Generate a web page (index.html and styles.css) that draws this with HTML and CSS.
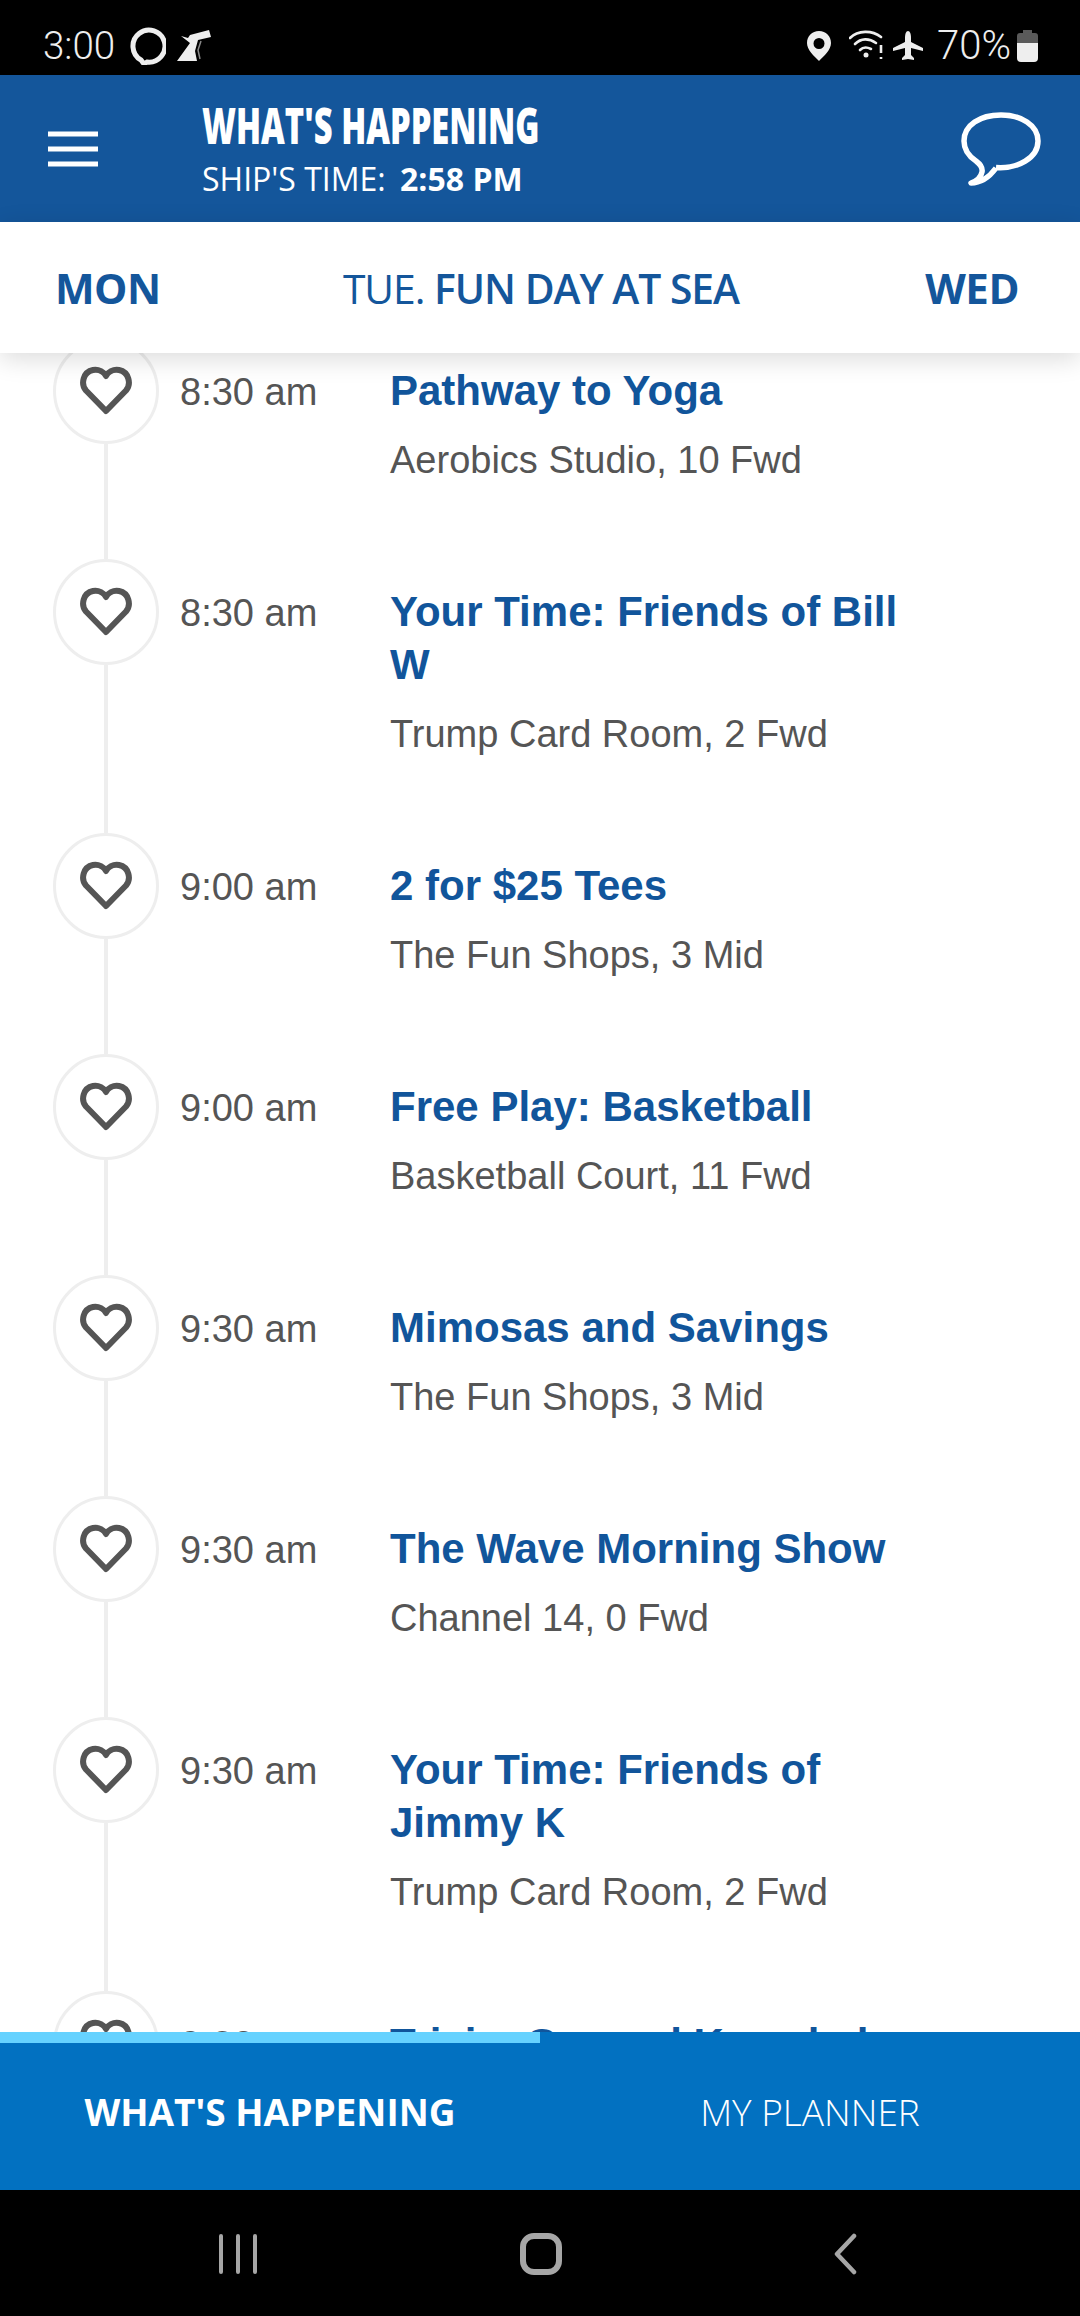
FILE: index.html
```html
<!DOCTYPE html>
<html lang="en">
<head>
  <meta charset="UTF-8" />
  <meta name="viewport" content="width=device-width, initial-scale=1.0"/>
  <title>What's Happening</title>
  <link rel="stylesheet" href="styles.css">
</head>
<body>
  <svg class="defs" width="0" height="0">
    <symbol id="heart" viewBox="0 0 52 50">
      <path d="M26 45 L6 24.500 C0.500 18 3 6 13 4 C19 3 24 6 26 10 C28 6 33 3 39 4 C49 6 51.500 18 46 24.500 Z" fill="none" stroke="#555" stroke-width="6" stroke-linejoin="round"/>
    </symbol>
  </svg>

  <div class="statusbar">
    <div class="status-left">
      <span class="clock">3:00</span>
      <svg class="st-ring" width="38" height="38" viewBox="0 0 38 38">
        <path d="M13 33 A16 16 0 1 1 19 35 L16 37 Z" fill="none" stroke="#eee" stroke-width="5"/>
      </svg>
      <svg class="st-funnel" width="36" height="32" viewBox="0 0 36 32">
        <path d="M0 31 L13 13 L4 6 L11 8 L13 5 L32 0 L34 7 L21 10 L18 21 L20 31 Z" fill="#eee"/>
        <path d="M24 11 L21 20 L23 29" fill="none" stroke="#888" stroke-width="1.500"/>
      </svg>
    </div>
    <div class="status-right">
      <svg class="st-pin" width="26" height="32" viewBox="0 0 26 32">
        <path fill-rule="evenodd" d="M13 1 C6 1 1 6 1 13 C1 20 8 26 13 31 C18 26 25 20 25 13 C25 6 20 1 13 1 Z M13 8 A5.500 5.500 0 1 1 13 19 A5.500 5.500 0 1 1 13 8 Z" fill="#eee"/>
      </svg>
      <svg class="st-wifi" width="36" height="32" viewBox="0 0 36 32">
        <g fill="none" stroke="#eee" stroke-width="2.600" stroke-linecap="round">
          <path d="M1 8 C9 0 23 0 32 7"/>
          <path d="M6 14 C12 8 20 8 27 13"/>
          <path d="M11 20 C14 17 18 17 22 19"/>
        </g>
        <circle cx="17" cy="25" r="2.500" fill="#eee"/>
        <path d="M32 15 V23 M32 27 V29" stroke="#eee" stroke-width="2.600" fill="none"/>
      </svg>
      <svg class="st-plane" width="32" height="32" viewBox="0 0 32 32">
        <path d="M16 1 C18 1 19 4 19 8 V12 L31 18 V21 L19 18 V25 L22 28 V30 L16 29 L10 30 V28 L13 25 V18 L1 21 V18 L13 12 V8 C13 4 14 1 16 1 Z" fill="#eee"/>
      </svg>
      <span class="battery-pct">70%</span>
      <svg class="st-battery" width="21" height="32" viewBox="0 0 21 32">
        <path d="M6 0 H15 V3 H18 Q21 3 21 6 V13 H0 V6 Q0 3 3 3 H6 Z" fill="#5a5a5a"/>
        <path d="M0 13 H21 V28 Q21 32 17 32 H4 Q0 32 0 28 Z" fill="#eee"/>
      </svg>
    </div>
  </div>

  <header class="topbar">
    <svg class="menu" width="50" height="36" viewBox="0 0 50 36">
      <path d="M0 3 H50 M0 18 H50 M0 33 H50" stroke="#fff" stroke-width="5"/>
    </svg>
    <div class="topbar-text">
      <div class="page-title"><span>WHAT'S HAPPENING</span></div>
      <div class="ship-time"><span>SHIP'S TIME:</span> <strong>2:58 PM</strong></div>
    </div>
    <svg class="chat" width="82" height="76" viewBox="0 0 82 76">
      <path d="M36 56.500 C58 58 78 47 78 30 C78 14 61 4 41 4 C20 4 4 14 4 30 C4 39 10 46 16 50 C20 53 23 56 22 61 C21 66 17 70 11 72 C20 72 28 68 36 57" fill="none" stroke="#fff" stroke-width="5.500" stroke-linejoin="round"/>
    </svg>
  </header>

  <nav class="daybar">
    <span class="day">MON</span>
    <span class="day-current"><span class="day-name">TUE.</span> FUN DAY AT SEA</span>
    <span class="day">WED</span>
  </nav>

  <main class="events">
    <div class="event">
      <div class="mark"><div class="fav"><svg width="52" height="50"><use href="#heart"/></svg></div><div class="line"></div></div>
      <div class="time">8:30 am</div>
      <div class="info"><div class="name">Pathway to Yoga</div><div class="place">Aerobics Studio, 10 Fwd</div></div>
    </div>
    <div class="event">
      <div class="mark"><div class="fav"><svg width="52" height="50"><use href="#heart"/></svg></div><div class="line"></div></div>
      <div class="time">8:30 am</div>
      <div class="info"><div class="name">Your Time: Friends of Bill W</div><div class="place">Trump Card Room, 2 Fwd</div></div>
    </div>
    <div class="event">
      <div class="mark"><div class="fav"><svg width="52" height="50"><use href="#heart"/></svg></div><div class="line"></div></div>
      <div class="time">9:00 am</div>
      <div class="info"><div class="name">2 for $25 Tees</div><div class="place">The Fun Shops, 3 Mid</div></div>
    </div>
    <div class="event">
      <div class="mark"><div class="fav"><svg width="52" height="50"><use href="#heart"/></svg></div><div class="line"></div></div>
      <div class="time">9:00 am</div>
      <div class="info"><div class="name">Free Play: Basketball</div><div class="place">Basketball Court, 11 Fwd</div></div>
    </div>
    <div class="event">
      <div class="mark"><div class="fav"><svg width="52" height="50"><use href="#heart"/></svg></div><div class="line"></div></div>
      <div class="time">9:30 am</div>
      <div class="info"><div class="name">Mimosas and Savings</div><div class="place">The Fun Shops, 3 Mid</div></div>
    </div>
    <div class="event">
      <div class="mark"><div class="fav"><svg width="52" height="50"><use href="#heart"/></svg></div><div class="line"></div></div>
      <div class="time">9:30 am</div>
      <div class="info"><div class="name">The Wave Morning Show</div><div class="place">Channel 14, 0 Fwd</div></div>
    </div>
    <div class="event">
      <div class="mark"><div class="fav"><svg width="52" height="50"><use href="#heart"/></svg></div><div class="line"></div></div>
      <div class="time">9:30 am</div>
      <div class="info"><div class="name">Your Time: Friends of Jimmy K</div><div class="place">Trump Card Room, 2 Fwd</div></div>
    </div>
    <div class="event">
      <div class="mark"><div class="fav"><svg width="52" height="50"><use href="#heart"/></svg></div><div class="line"></div></div>
      <div class="time">9:30 am</div>
      <div class="info"><div class="name">Trivia: General Knowledge</div></div>
    </div>
  </main>

  <div class="tabs">
    <div class="tab-progress"></div>
    <div class="tab-row">
      <div class="tab tab-active"><span>WHAT'S HAPPENING</span></div>
      <div class="tab"><span>MY PLANNER</span></div>
    </div>
  </div>

  <div class="navbar">
    <svg class="nav-recent" width="38" height="40" viewBox="0 0 38 40">
      <path d="M2 2 V38 M19 2 V38 M36 2 V38" stroke="#a6a6a6" stroke-width="4" stroke-linecap="round"/>
    </svg>
    <svg class="nav-home" width="42" height="42" viewBox="0 0 42 42">
      <rect x="3" y="3" width="36" height="36" rx="11" fill="none" stroke="#a6a6a6" stroke-width="6"/>
    </svg>
    <svg class="nav-back" width="24" height="42" viewBox="0 0 24 42">
      <path d="M21 3 L4 21 L21 39" fill="none" stroke="#a6a6a6" stroke-width="4.500" stroke-linecap="round" stroke-linejoin="round"/>
    </svg>
  </div>
</body>
</html>
```

FILE: styles.css
```css
* {
  box-sizing: border-box;
}
html, body {
  margin: 0;
  height: 2316px;
}
body {
  width: 1080px;
  display: flex;
  flex-direction: column;
  overflow: hidden;
  font-family: 'Liberation Sans', Arial, sans-serif;
  background-color: #fff;
}
.defs {
  display: none;
}

/* status bar */
.statusbar {
  height: 75px;
  flex: none;
  background-color: #000;
  color: #eee;
  display: flex;
  justify-content: space-between;
  align-items: center;
  padding: 16px 42px 0 43px;
  font-family: Roboto, sans-serif;
}
.status-left, .status-right {
  display: flex;
  align-items: center;
}
.clock {
  font-size: 38.500px;
  font-weight: 300;
}
.st-ring {
  margin-left: 13px;
}
.st-funnel {
  margin-left: 11px;
}
.st-wifi {
  margin-left: 17px;
}
.st-plane {
  margin-left: 7px;
}
.battery-pct {
  margin-left: 13px;
  font-size: 40px;
  font-weight: 300;
}
.st-battery {
  margin-left: 6px;
}

/* header */
.topbar {
  height: 147px;
  flex: none;
  background-color: #14569b;
  color: #fff;
  display: flex;
  align-items: center;
  padding-left: 48px;
  padding-right: 38px;
}
.topbar-text {
  margin-left: 104px;
  padding-top: 5px;
  flex: 1;
  font-family: 'Open Sans', sans-serif;
  white-space: nowrap;
}
.page-title {
  font-size: 49px;
  font-weight: 800;
  line-height: 56px;
  margin-top: -6px;
}
.page-title span {
  display: inline-block;
  transform: scaleX(0.668);
  transform-origin: left;
}
.ship-time {
  font-size: 32px;
  line-height: 40px;
  margin-top: 6px;
}
.ship-time strong {
  margin-left: 6px;
  font-weight: 700;
}

/* day switcher */
.daybar {
  height: 131px;
  flex: none;
  background-color: #fff;
  color: #14569b;
  display: flex;
  justify-content: space-between;
  align-items: center;
  padding: 0 61px 0 55px;
  position: relative;
  z-index: 2;
  box-shadow: 0 6px 24px rgba(0, 0, 0, 0.14);
  font-family: 'Open Sans', sans-serif;
  font-size: 42px;
  white-space: nowrap;
}
.day {
  font-weight: 700;
  letter-spacing: -0.500px;
}
.day-current {
  margin-right: 4px;
  font-size: 40.800px;
  font-weight: 600;
  letter-spacing: -1px;
}
.day-name {
  font-weight: 400;
}

/* list */
.events {
  flex: 1;
  min-height: 0;
  overflow: hidden;
  margin-top: -15px;
}
.event {
  display: flex;
  padding-left: 53px;
}
.mark {
  width: 106px;
  flex: none;
  display: flex;
  flex-direction: column;
  align-items: center;
}
.fav {
  width: 106px;
  height: 106px;
  flex: none;
  border: 3px solid #eee;
  border-radius: 50%;
  display: flex;
  align-items: center;
  justify-content: center;
}
.line {
  width: 4px;
  flex: 1;
  background-color: #eee;
}
.time {
  width: 231px;
  flex: none;
  padding: 28px 0 0 21px;
  font-size: 38px;
  line-height: 53px;
  color: #555;
}
.info {
  width: 545px;
  padding: 26px 0 75px;
}
.name {
  font-size: 42px;
  font-weight: 700;
  line-height: 53px;
  color: #11559b;
}
.place {
  margin-top: 19px;
  font-size: 38px;
  line-height: 48px;
  color: #555;
}

/* bottom tabs */
.tabs {
  height: 158px;
  flex: none;
  background-color: #0271c1;
  color: #fff;
  font-family: 'Open Sans', sans-serif;
  position: relative;
  z-index: 2;
}
.tab-progress {
  width: 540px;
  height: 11px;
  background-color: #66d2ff;
}
.tab-row {
  display: flex;
  height: 147px;
  padding-bottom: 10px;
}
.tab {
  width: 50%;
  display: flex;
  align-items: center;
  justify-content: center;
  font-size: 37px;
  font-weight: 300;
  white-space: nowrap;
}
.tab-active {
  font-weight: 700;
}

/* nav bar */
.navbar {
  height: 126px;
  flex: none;
  background-color: #000;
  display: flex;
  align-items: center;
  padding: 2px 0 0 219px;
}
.nav-home {
  margin-left: 263px;
}
.nav-back {
  margin-left: 271px;
}
```
